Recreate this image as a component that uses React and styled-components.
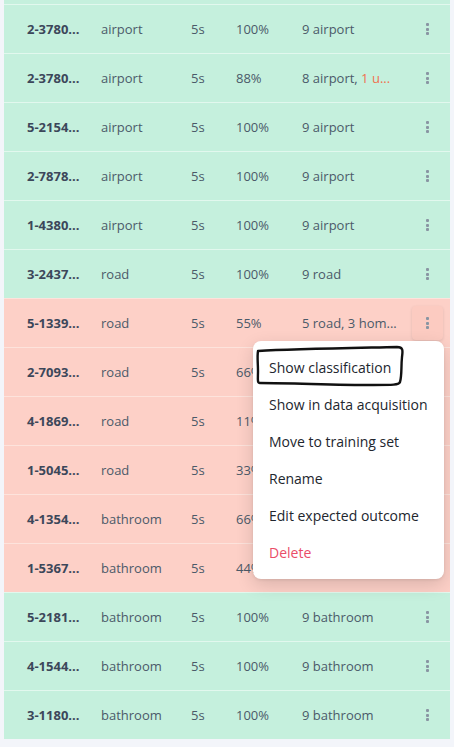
import React from 'react';
import styled, { createGlobalStyle } from 'styled-components';

const Global = createGlobalStyle`
  body {
    margin: 0;
    background: #f3f5fa;
    font-family: "Open Sans", "Noto Sans", sans-serif;
  }
`;

/* table viewport, the list is scrolled a bit so the top row is cut */
const Viewport = styled.div`
  margin-left: 4px;
  width: 446px;
  height: 739px;
  overflow: hidden;
`;

const List = styled.div`
  margin-top: -45px;
`;

const Row = styled.div`
  position: relative;
  display: grid;
  grid-template-columns: 74px 90px 45px 66px 1fr 31px;
  align-items: center;
  height: 48px;
  padding: 0 7px 0 23px;
  border-top: 1px solid ${p => (p.$bad ? '#fde3dc' : '#e2f8ee')};
  background: ${p => (p.$bad ? '#fdd0c7' : '#c5f0dd')};
  font-size: 13px;
  color: #4b5a69;
  z-index: ${p => (p.$open ? 2 : 1)};
`;

const Id = styled.span`
  font-weight: 700;
  color: #3c475a;
`;

const Cell = styled.span`
  white-space: nowrap;
`;

const Warn = styled.span`
  color: #f0714f;
`;

const Kebab = styled.button`
  width: 31px;
  height: 34px;
  border: 0;
  padding: 0;
  border-radius: 4px;
  background: ${p => (p.$active ? '#fccbc1' : 'transparent')};
  box-shadow: ${p => (p.$active ? '0 1px 3px rgba(0,0,0,0.12)' : 'none')};
  display: flex;
  flex-direction: column;
  align-items: center;
  justify-content: center;
  gap: 1.5px;
  cursor: pointer;
`;

const Dot = styled.span`
  width: 3px;
  height: 3px;
  border-radius: 1px;
  background: #8995a2;
`;

const Menu = styled.div`
  position: absolute;
  top: 42px;
  right: 6px;
  width: 191px;
  padding: 8px 0;
  background: #fff;
  border-radius: 8px;
  box-shadow: 0 6px 18px rgba(0, 0, 0, 0.14), 0 1px 3px rgba(0, 0, 0, 0.08);
`;

const Item = styled.div`
  height: 37px;
  display: flex;
  align-items: center;
  padding-left: 16px;
  font-size: 14px;
  color: ${p => (p.$danger ? '#ea4d68' : '#22262e')};
`;

const Scribble = styled.svg`
  position: absolute;
  left: 0;
  top: 0;
  pointer-events: none;
`;

const rows = [
  ['4-2290...', 'airport', '100%', '9 airport'],
  ['2-3780...', 'airport', '100%', '9 airport'],
  ['2-3780...', 'airport', '88%', null],
  ['5-2154...', 'airport', '100%', '9 airport'],
  ['2-7878...', 'airport', '100%', '9 airport'],
  ['1-4380...', 'airport', '100%', '9 airport'],
  ['3-2437...', 'road', '100%', '9 road'],
  ['5-1339...', 'road', '55%', '5 road, 3 hom...', 'bad', 'open'],
  ['2-7093...', 'road', '66%', '6 road, 3 hom...', 'bad'],
  ['4-1869...', 'road', '11%', '1 road, 8 hom...', 'bad'],
  ['1-5045...', 'road', '33%', '3 road, 6 hom...', 'bad'],
  ['4-1354...', 'bathroom', '66%', '6 bathroom, 3...', 'bad'],
  ['1-5367...', 'bathroom', '44%', '4 bathroom, 5...', 'bad'],
  ['5-2181...', 'bathroom', '100%', '9 bathroom'],
  ['4-1544...', 'bathroom', '100%', '9 bathroom'],
  ['3-1180...', 'bathroom', '100%', '9 bathroom'],
];

const menuItems = [
  'Show classification',
  'Show in data acquisition',
  'Move to training set',
  'Rename',
  'Edit expected outcome',
];

function RowMenu() {
  return (
    <Menu>
      {menuItems.map(m => <Item key={m}>{m}</Item>)}
      <Item $danger>Delete</Item>
      <Scribble width="191" height="60">
        <path
          d="M5 10 C40 8, 100 7, 144 6 C150 6, 150 9, 149 16 C148 26, 149 34, 147 41 C146 44, 140 44, 120 44 C80 44, 40 42, 7 42 C4 42, 5 38, 5 30 C5 22, 4 16, 5 10 Z"
          fill="none"
          stroke="#111"
          strokeWidth="2.4"
          strokeLinejoin="round"
        />
      </Scribble>
    </Menu>
  );
}

export default function App() {
  return (
    <>
      <Global />
      <Viewport>
        <List>
          {rows.map((r, i) => (
            <Row key={i} $bad={r[4] === 'bad'} $open={r[5] === 'open'}>
              <Id>{r[0]}</Id>
              <Cell>{r[1]}</Cell>
              <Cell>5s</Cell>
              <Cell>{r[2]}</Cell>
              <Cell>
                {r[3] === null ? <>8 airport, <Warn>1 u...</Warn></> : r[3]}
              </Cell>
              <Kebab $active={r[5] === 'open'}>
                <Dot /><Dot /><Dot />
              </Kebab>
              {r[5] === 'open' && <RowMenu />}
            </Row>
          ))}
        </List>
      </Viewport>
    </>
  );
}
